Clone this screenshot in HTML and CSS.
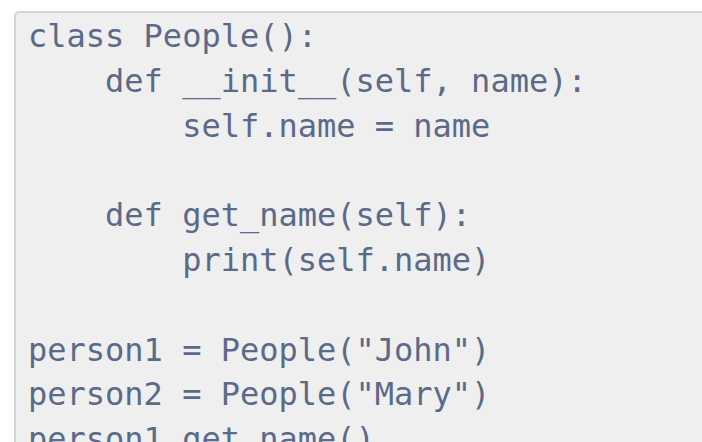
FILE: index.html
```html
<!DOCTYPE html>
<html>
<head>
<meta charset="utf-8">
<link rel="stylesheet" href="styles.css">
</head>
<body>
<div class="page">
<pre class="code">class People():
    def __init__(self, name):
        self.name = name

    def get_name(self):
        print(self.name)

person1 = People("John")
person2 = People("Mary")
person1.get_name()</pre>
</div>
</body>
</html>
```
FILE: styles.css
```css
html, body {
  margin: 0;
  padding: 0;
  background: #ffffff;
  overflow: hidden;
}
.page {
  padding: 11px 0 0 14px;
}
.code {
  margin: 0;
  background: #efefef;
  border: 2px solid #d6d6d6;
  border-right: none;
  border-radius: 5px 0 0 0;
  padding: 1px 0 0 12px;
  font-family: "DejaVu Sans Mono", monospace;
  font-size: 32px;
  line-height: 44.8px;
  color: #5b6a88;
  height: 460px;
}
```
